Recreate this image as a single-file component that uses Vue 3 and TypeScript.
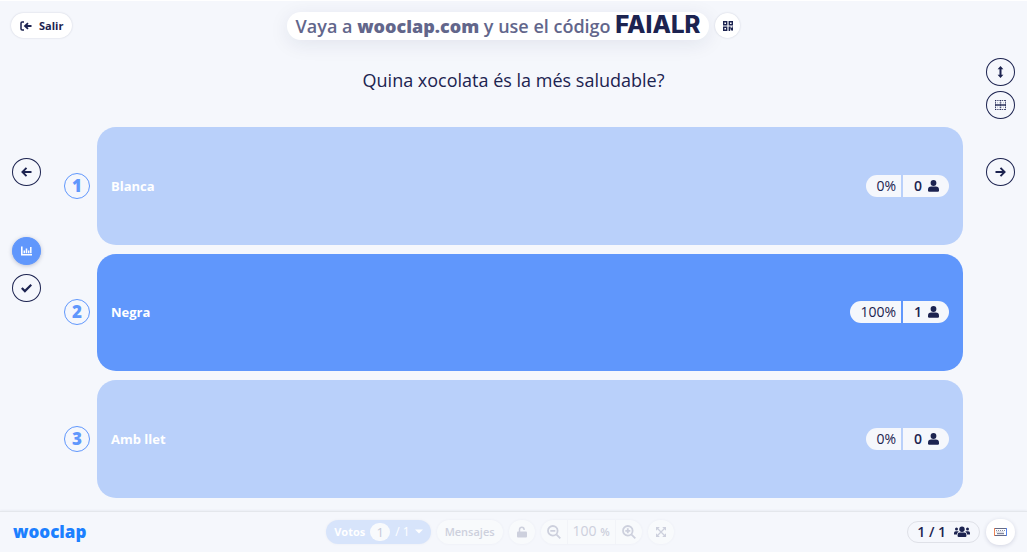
<script setup lang="ts">
interface Option {
  label: string
  votes: number
  percent: number
}

const options: Option[] = [
  { label: 'Blanca', votes: 0, percent: 0 },
  { label: 'Negra', votes: 1, percent: 100 },
  { label: 'Amb llet', votes: 0, percent: 0 },
]
</script>

<template>
  <div class="page">
    <header class="top">
      <button class="pill exit" type="button">
        <svg width="12" height="10" viewBox="0 0 12 10" fill="none" stroke="currentColor" stroke-width="1.5">
          <path d="M4 1H2.2Q1 1 1 2.2v5.6Q1 9 2.2 9H4" />
          <path d="M11.5 5H5.5M8 2.2L5 5l3 2.8" stroke-width="1.8" />
        </svg>
        Salir
      </button>
      <div class="join">
        <p class="join-text">Vaya a <b>wooclap.com</b> y use el código <strong>FAIALR</strong></p>
        <button class="pill qr" type="button" aria-label="QR">
          <svg width="10" height="10" viewBox="0 0 10 10" fill="currentColor">
            <path fill-rule="evenodd" d="M0 0h4.4v4.4H0zM1.4 1.4v1.6H3V1.4zM5.6 0H10v4.4H5.6zM7 1.4v1.6h1.6V1.4zM0 5.6h4.4V10H0zM1.4 7v1.6H3V7z" />
            <path d="M5.6 5.6h2v1.2H10V9H7.6V7.6H7V10H5.6zM8.8 5.6H10v1H8.8zM7.8 9.2h.8v.8h-.8zM9.2 9.2h.8v.8h-.8z" />
          </svg>
        </button>
      </div>
    </header>

    <div class="body">
      <nav class="rail left">
        <button class="round" type="button" aria-label="Anterior">
          <svg width="11" height="12" viewBox="0 0 11 12" fill="none" stroke="currentColor" stroke-width="1.9"><path d="M10.500 6H1.500M5.500 1.800L1.400 6l4.100 4.200" /></svg>
        </button>
        <div class="tools">
          <button class="round active" type="button" aria-label="Resultados">
            <svg width="11" height="10" viewBox="0 0 11 10" fill="none" stroke="currentColor"><path d="M.8 0.500v8.300H11" stroke-width="1.6" /><path d="M3.3 7.300V4.500M5.500 7.300V2.600M7.700 7.300V4.500M9.800 7.300V1" stroke-width="1.500" /></svg>
          </button>
          <button class="round" type="button" aria-label="Respuesta correcta">
            <svg width="11" height="10" viewBox="0 0 11 10" fill="none" stroke="currentColor" stroke-width="2.200"><path d="M.8 5l3.100 3.100L10.300 1.700" /></svg>
          </button>
        </div>
      </nav>

      <main class="content">
        <h1 class="question">Quina xocolata és la més saludable?</h1>
        <ol class="options">
          <li v-for="(option, index) in options" :key="option.label" class="option">
            <span class="number">{{ index + 1 }}</span>
            <div class="card" :class="{ chosen: option.percent > 0 }">
              <span class="label">{{ option.label }}</span>
              <span class="score">
                <span class="percent">{{ option.percent }}%</span>
                <span class="votes">
                  {{ option.votes }}
                  <svg width="11" height="12" viewBox="0 0 11 12" fill="currentColor"><circle cx="5.5" cy="3" r="2.900" /><path d="M3.200 6.600h4.600Q11 6.600 11 9.800v.7q0 1.200-1.200 1.200H1.200Q0 11.700 0 10.500v-.7Q0 6.600 3.200 6.600z" /></svg>
                </span>
              </span>
            </div>
          </li>
        </ol>
      </main>

      <nav class="rail right">
        <button class="round" type="button" aria-label="Altura">
          <svg width="7" height="12" viewBox="0 0 7 12" fill="currentColor"><path d="M3.500 0l2.900 3.300H4.500v5.400h1.900L3.500 12 .6 8.700h1.900V3.300H.6z" /></svg>
        </button>
        <button class="round" type="button" aria-label="Cuadrícula">
          <svg width="11" height="10" viewBox="0 0 11 10" fill="none" stroke="currentColor"><path d="M0 .5h11M0 9.500h11M.5 0v10M5.500 0v10M10.500 0v10" stroke-dasharray="1.400 .8" opacity=".8" /><path d="M0 2.800h11M0 7.200h11" stroke-dasharray="1 1" opacity=".3" /><path d="M0 5h11" stroke-width="1.400" /></svg>
        </button>
        <button class="round next" type="button" aria-label="Siguiente">
          <svg width="11" height="12" viewBox="0 0 11 12" fill="none" stroke="currentColor" stroke-width="1.900"><path d="M.5 6h9M5.500 1.800L9.600 6l-4.100 4.200" /></svg>
        </button>
      </nav>
    </div>

    <footer class="bottom">
      <a class="logo" href="#">wooclap</a>
      <div class="controls">
        <button class="ctl poll" type="button">
          <b>Votos</b><span class="count">1</span><span class="total">/ 1</span>
          <svg width="8" height="5" viewBox="0 0 8 5" fill="currentColor"><path d="M0 .5h8L4 4.500z" /></svg>
        </button>
        <button class="ctl messages" type="button">Mensajes</button>
        <button class="ctl icon" type="button" aria-label="Bloquear">
          <svg width="10" height="12" viewBox="0 0 10 12" fill="currentColor"><rect y="5.500" width="10" height="6" rx="1" /><path d="M2.500 6V3.500a2.300 2.300 0 0 1 4.600 0V4" fill="none" stroke="currentColor" stroke-width="1.500" /></svg>
        </button>
        <div class="ctl zoom">
          <button class="zoom-btn" type="button" aria-label="Reducir">
            <svg width="14" height="14" viewBox="0 0 14 14" fill="none" stroke="currentColor" stroke-width="1.800"><circle cx="5.800" cy="5.800" r="4.800" /><path d="M9.300 9.300l4 4M3.300 5.800h5" /></svg>
          </button>
          <span class="zoom-value">100 <small>%</small></span>
          <button class="zoom-btn" type="button" aria-label="Ampliar">
            <svg width="14" height="14" viewBox="0 0 14 14" fill="none" stroke="currentColor" stroke-width="1.800"><circle cx="5.800" cy="5.800" r="4.800" /><path d="M9.300 9.300l4 4M3.300 5.800h5M5.800 3.300v5" /></svg>
          </button>
        </div>
        <button class="ctl icon" type="button" aria-label="Pantalla completa">
          <svg width="10" height="10" viewBox="0 0 10 10" fill="currentColor"><path d="M0 0h3.800L0 3.800zM10 0v3.800L6.200 0zM0 10V6.200L3.800 10zM10 10H6.200L10 6.200z" /><path d="M1 1l8 8M9 1L1 9" stroke="currentColor" stroke-width="1.200" /></svg>
        </button>
      </div>
      <div class="status">
        <button class="people" type="button">
          1 / 1
          <svg width="16" height="12" viewBox="0 0 16 12" fill="currentColor"><circle cx="8" cy="3.200" r="2.700" /><circle cx="2.500" cy="3" r="1.500" /><circle cx="13.500" cy="3" r="1.500" /><path d="M5.800 6.500h4.400q2.200 0 2.200 2.200V10q0 1-1 1H4.600q-1 0-1-1V8.700q0-2.200 2.200-2.200zM0 8.500V7q0-1.700 1.700-1.700H4q.4 0 .8.400Q3 6.500 2.900 8.500zM16 8.500V7q0-1.700-1.700-1.700H12q-.4 0-.8.400 1.800.8 1.900 2.800z" /></svg>
        </button>
        <button class="keyboard" type="button" aria-label="Teclado">
          <svg width="13" height="8" viewBox="0 0 13 8" fill="none"><rect x=".5" y=".5" width="12" height="7" stroke="#656a86" /><path d="M2 2.500h9M2.500 4h8" stroke="#858aa4" stroke-dasharray="1 1" /><path d="M3 5.700h7" stroke="#656a86" /><path d="M.5 0v8" stroke="#ed8455" /><path d="M12.500 0v8" stroke="#5586ed" /></svg>
        </button>
      </div>
    </footer>
  </div>
</template>

<style>
body {
  background: #fff;
}
</style>

<style scoped>
.page {
  --navy: #1c2350;
  --blue: #6097fc;
  box-sizing: border-box;
  display: flex;
  flex-direction: column;
  min-height: calc(100vh - 6px);
  border-top: 1px solid #fff;
  background: #f5f7fc;
  color: var(--navy);
  font-family: "Open Sans", "Noto Sans", sans-serif;
}
button {
  display: flex;
  align-items: center;
  justify-content: center;
  box-sizing: border-box;
  margin: 0;
  padding: 0;
  border: 0;
  color: inherit;
  font: inherit;
  cursor: pointer;
}
svg {
  display: block;
  flex: none;
}
.top {
  display: grid;
  grid-template-columns: 1fr auto 1fr;
  align-items: center;
  height: 49px;
  padding: 0 11px;
}
.pill {
  height: 25px;
  border-radius: 13px;
  background: #fff;
  box-shadow: 0 0 2px #1c235030;
}
.exit {
  justify-self: start;
  gap: 7px;
  padding: 0 9px;
  font-size: 11px;
  font-weight: 700;
}
.join {
  display: flex;
  align-items: center;
  gap: 6px;
}
.join-text {
  margin: 0;
  padding: 0 9px;
  border-radius: 14px;
  background: #fff;
  box-shadow: 0 4px 20px #1c235016;
  color: #62668b;
  font-size: 18px;
  font-weight: 600;
  line-height: 28px;
  white-space: nowrap;
}
.join-text b {
  font-weight: 800;
}
.join-text strong {
  color: var(--navy);
  font-family: Inter, "Open Sans", sans-serif;
  font-size: 24px;
  font-weight: 800;
  line-height: 20px;
}
.qr {
  width: 25px;
}
.body {
  display: grid;
  grid-template-columns: 64px 1fr 64px;
  flex: 1;
}
.rail {
  display: flex;
  flex-direction: column;
}
.left {
  align-items: flex-start;
  padding: 108px 0 0 12px;
}
.right {
  align-items: flex-end;
  gap: 5px;
  padding: 8px 12px 0 0;
}
.round {
  width: 29px;
  height: 28px;
  border: 1px solid var(--navy);
  border-radius: 50%;
  background: transparent;
}
.active {
  border-color: var(--blue);
  background: var(--blue);
  box-shadow: 0 1px 4px #1c235040;
  color: #fff;
}
.tools {
  display: grid;
  gap: 9px;
  margin-top: 51px;
}
.next {
  margin-top: 34px;
}
.content {
  display: flex;
  flex-direction: column;
  padding: 16px 0 13px;
}
.question {
  margin: 0;
  font-size: 18px;
  font-weight: 400;
  line-height: 28px;
  text-align: center;
}
.options {
  display: grid;
  grid-auto-rows: 1fr;
  flex: 1;
  gap: 9px;
  margin: 33px 0 0;
  padding: 0;
  list-style: none;
}
.option {
  display: grid;
  grid-template-columns: 26px 1fr;
  align-items: center;
  gap: 7px;
}
.number {
  box-sizing: border-box;
  height: 26px;
  border: 1px solid var(--blue);
  border-radius: 50%;
  color: var(--blue);
  font-size: 17px;
  font-weight: 800;
  line-height: 24px;
  text-align: center;
}
.card {
  display: flex;
  align-items: center;
  justify-content: space-between;
  box-sizing: border-box;
  height: 100%;
  padding: 0 14px;
  border-radius: 19px;
  background: #b9d0fa;
}
.chosen {
  background: var(--blue);
}
.label {
  color: #fff;
  font-size: 13px;
  font-weight: 700;
}
.score {
  display: flex;
  gap: 2px;
  font-size: 14px;
  line-height: 22px;
}
.percent,
.votes {
  background: #f5f7fc;
}
.percent {
  padding: 0 5px 0 10px;
  border-radius: 11px 0 0 11px;
}
.votes {
  display: flex;
  align-items: center;
  gap: 6px;
  padding: 0 10px 0 11px;
  border-radius: 0 11px 11px 0;
  font-weight: 600;
}
.bottom {
  display: grid;
  grid-template-columns: 1fr auto 1fr;
  align-items: center;
  box-sizing: border-box;
  height: 41px;
  padding: 0 40px 1px 13px;
  padding-right: 12px;
  border-top: 1px solid #e4e7ec;
  box-shadow: 0 -1px 2px #1c23500c;
}
.logo {
  justify-self: start;
  color: #1c80ff;
  font-size: 17px;
  font-weight: 800;
  line-height: 24px;
  text-decoration: none;
}
.controls,
.status {
  display: flex;
  align-items: center;
  gap: 6px;
}
.controls {
  padding-right: 28px;
}
.status {
  justify-self: end;
}
.ctl {
  height: 24px;
  border-radius: 12px;
  background: #f8fafc;
  box-shadow: 0 0 3px #1c23500c;
  color: #cdd0dd;
}
.poll {
  gap: 5px;
  padding: 0 8px;
  background: #d7e4fb;
  color: #fff;
  font-size: 11px;
}
.count {
  width: 20px;
  border-radius: 9px;
  background: #f8fafc;
  color: #c5c9d8;
  font-size: 13px;
  line-height: 18px;
}
.total {
  font-size: 12px;
}
.messages {
  padding: 0 8px;
  font-size: 11px;
  font-weight: 600;
}
.icon {
  width: 26px;
}
.zoom {
  display: flex;
  align-items: center;
}
.zoom-btn {
  width: 26px;
  height: 24px;
  background: transparent;
}
.zoom-value {
  padding: 0 5px;
  border: solid #f2f4f8;
  border-width: 0 1px;
  font-size: 14px;
  line-height: 24px;
}
.zoom-value small {
  font-size: 11px;
  font-weight: 600;
}
.people {
  gap: 8px;
  height: 22px;
  padding: 0 9px;
  border: 1px solid #dfe1e8;
  border-radius: 11px;
  background: transparent;
  font-size: 14px;
  font-weight: 600;
}
.keyboard {
  width: 29px;
  height: 26px;
  border-radius: 13px;
  background: #fff;
  box-shadow: 0 1px 4px #1c235028;
}
</style>
